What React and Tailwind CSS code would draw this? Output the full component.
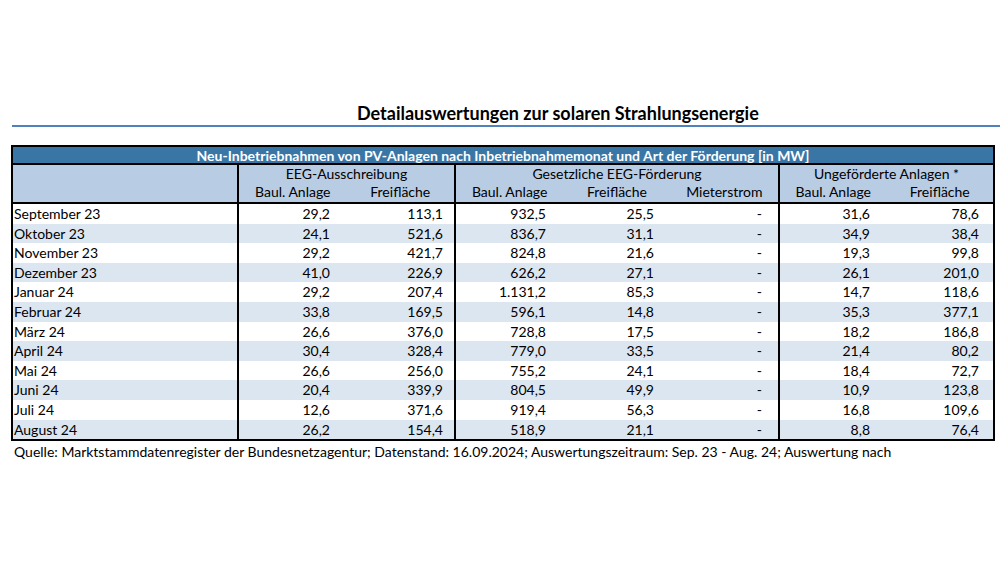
import React from "react";

const rows = [
  ["September 23", "29,2", "113,1", "932,5", "25,5", "-", "31,6", "78,6"],
  ["Oktober 23", "24,1", "521,6", "836,7", "31,1", "-", "34,9", "38,4"],
  ["November 23", "29,2", "421,7", "824,8", "21,6", "-", "19,3", "99,8"],
  ["Dezember 23", "41,0", "226,9", "626,2", "27,1", "-", "26,1", "201,0"],
  ["Januar 24", "29,2", "207,4", "1.131,2", "85,3", "-", "14,7", "118,6"],
  ["Februar 24", "33,8", "169,5", "596,1", "14,8", "-", "35,3", "377,1"],
  ["März 24", "26,6", "376,0", "728,8", "17,5", "-", "18,2", "186,8"],
  ["April 24", "30,4", "328,4", "779,0", "33,5", "-", "21,4", "80,2"],
  ["Mai 24", "26,6", "256,0", "755,2", "24,1", "-", "18,4", "72,7"],
  ["Juni 24", "20,4", "339,9", "804,5", "49,9", "-", "10,9", "123,8"],
  ["Juli 24", "12,6", "371,6", "919,4", "56,3", "-", "16,8", "109,6"],
  ["August 24", "26,2", "154,4", "518,9", "21,1", "-", "8,8", "76,4"],
];

// width + right padding + left divider for each value column
const cols = [
  { w: "w-[108px]", pr: "pr-[15px]", line: true },
  { w: "w-[109px]", pr: "pr-[11px]", line: false },
  { w: "w-[108px]", pr: "pr-[16px]", line: true },
  { w: "w-[108px]", pr: "pr-[16px]", line: false },
  { w: "w-[108px]", pr: "pr-[16px]", line: false },
  { w: "w-[109px]", pr: "pr-[17px]", line: true },
  { w: "w-[106px]", pr: "pr-[14px]", line: false },
];

const SubHead = ({ label }) => (
  <div className="flex-1 text-center leading-[18px]">{label}</div>
);

export default function App() {
  return (
    <div
      className="w-[1000px] h-[563px] bg-white text-black overflow-hidden"
      style={{ fontFamily: "Lato, 'Open Sans', sans-serif" }}
    >
      <div className="pt-[102px] pl-[357px] h-[125px] text-[18px] font-bold leading-[23px]">
        Detailauswertungen zur solaren Strahlungsenergie
      </div>
      <div className="ml-[12px] h-[2px] bg-[#4f81bd]" />

      <div className="ml-[11px] mt-[18px] w-[984px] border-2 border-black text-[14px]">
        <div className="h-[18px] bg-[#3a76a5] text-white font-bold text-center leading-[18px] border-b-2 border-black">
          Neu-Inbetriebnahmen von PV-Anlagen nach Inbetriebnahmemonat und Art der Förderung [in MW]
        </div>

        <div className="flex h-[39px] bg-[#b8cce4] border-b-2 border-black">
          <div className="w-[224px]" />
          <div className="w-[217px] border-l-2 border-black flex flex-col">
            <div className="text-center leading-[18px]">EEG-Ausschreibung</div>
            <div className="flex">
              <SubHead label="Baul. Anlage" />
              <SubHead label="Freifläche" />
            </div>
          </div>
          <div className="w-[324px] border-l-2 border-black flex flex-col">
            <div className="text-center leading-[18px]">Gesetzliche EEG-Förderung</div>
            <div className="flex">
              <SubHead label="Baul. Anlage" />
              <SubHead label="Freifläche" />
              <SubHead label="Mieterstrom" />
            </div>
          </div>
          <div className="w-[215px] border-l-2 border-black flex flex-col">
            <div className="text-center leading-[18px]">Ungeförderte Anlagen *</div>
            <div className="flex">
              <SubHead label="Baul. Anlage" />
              <SubHead label="Freifläche" />
            </div>
          </div>
        </div>

        {rows.map((r, i) => (
          <div
            key={r[0]}
            className={`flex h-[19.6px] leading-[19.6px] ${i % 2 === 1 ? "bg-[#dce6f1]" : "bg-white"}`}
          >
            <div className="w-[224px] pl-[1px]">{r[0]}</div>
            {r.slice(1).map((v, j) => (
              <div
                key={j}
                className={`${cols[j].w} ${cols[j].pr} text-right ${cols[j].line ? "border-l-2 border-black" : ""}`}
              >
                {v}
              </div>
            ))}
          </div>
        ))}
      </div>

      <div className="pl-[14px] pt-[1px] text-[14px] leading-[20px]">
        Quelle: Marktstammdatenregister der Bundesnetzagentur; Datenstand: 16.09.2024; Auswertungszeitraum: Sep. 23 - Aug. 24; Auswertung nach
      </div>
    </div>
  );
}
